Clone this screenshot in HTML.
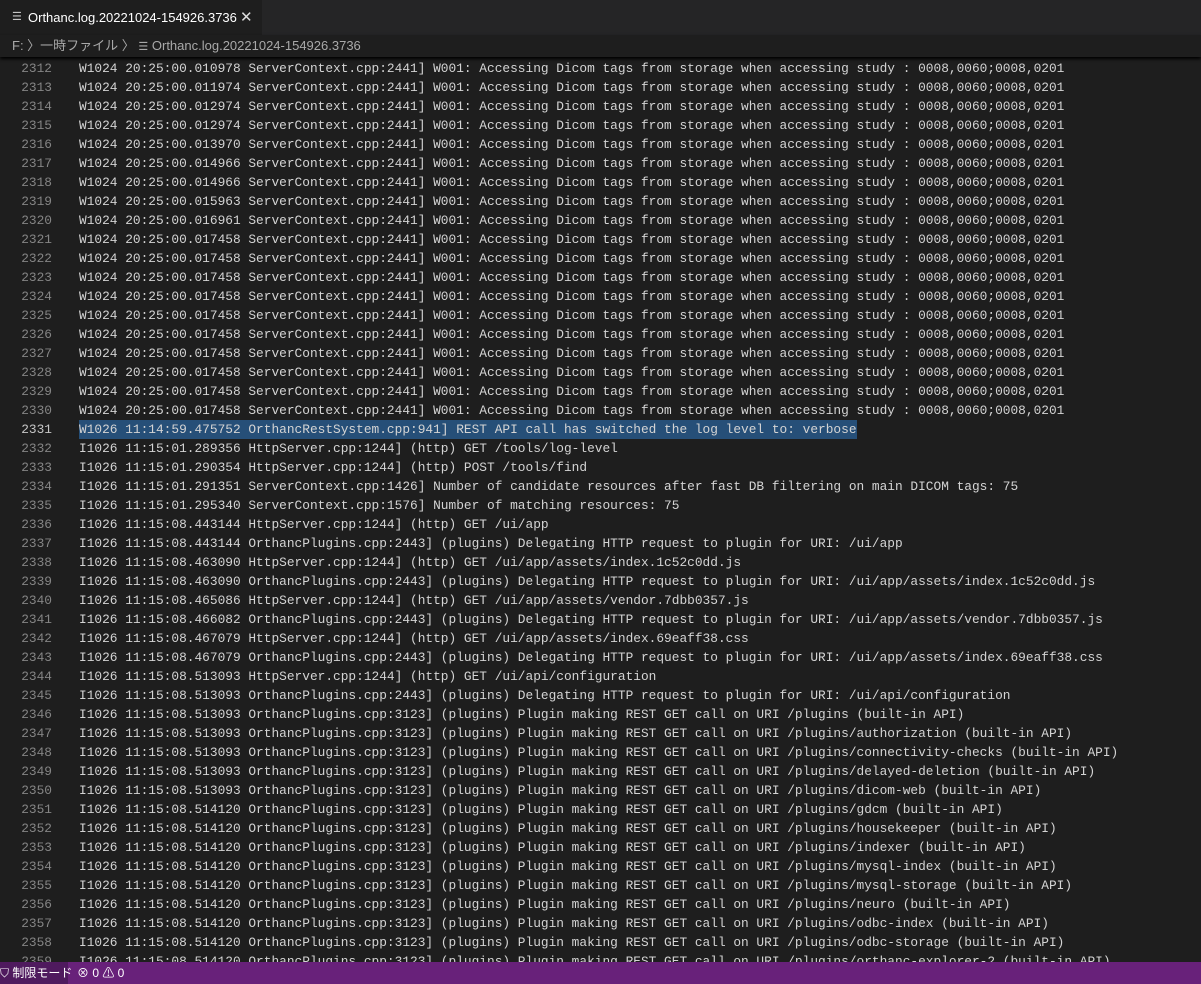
<!DOCTYPE html>
<html><head><meta charset="utf-8"><style>
*{margin:0;padding:0;box-sizing:border-box}
body{width:1201px;height:984px;background:#1e1e1e;overflow:hidden;position:relative;font-family:"Liberation Sans","Noto Sans CJK JP",sans-serif}
#tabs{position:absolute;top:0;left:0;width:1201px;height:35px;background:#252526}
#tab{position:absolute;left:0;top:0;width:262px;height:35px;background:#1e1e1e;color:#fff;font-size:13px;line-height:35px;padding-left:28px;white-space:nowrap}
#tab .ic{position:absolute;left:12px;top:0;color:#c5c5c5;font-size:11px}
#tab .x{position:absolute;left:240px;top:0;font-size:15px;color:#ddd}
#crumb{position:absolute;top:35px;left:0;width:1201px;height:22px;background:#1e1e1e;color:#a9a9a9;font-size:13px;line-height:22px;padding-left:12px;box-shadow:0 2px 3px #000;white-space:nowrap}
#ed{position:absolute;top:59px;left:0;width:1201px;height:903px;overflow:hidden;font-family:"Liberation Mono",monospace;font-size:12.83px;line-height:19px}
.l{height:19px;position:relative}
.n{position:absolute;left:0;width:52px;text-align:right;color:#858585}
.t{position:absolute;left:79px;color:#d4d4d4;white-space:pre}
.cur .n{color:#c6c6c6}
.sel{background:#264f78}
#sb{position:absolute;top:962px;left:0;width:1201px;height:22px;background:#68217a;color:#fff;font-size:12px;line-height:22px;white-space:nowrap;overflow:hidden}
#rm{position:absolute;left:0;top:0;width:68px;height:22px;background:#4f1a5e}
</style></head><body>
<div id="tabs"><div id="tab"><span class="ic">☰</span>Orthanc.log.20221024-154926.3736<span class="x">✕</span></div></div>
<div id="crumb">F: 〉一時ファイル 〉 <span style="font-size:11px">☰</span> Orthanc.log.20221024-154926.3736</div>
<div id="ed"><div class="l"><span class="n">2312</span><span class="t">W1024 20:25:00.010978 ServerContext.cpp:2441] W001: Accessing Dicom tags from storage when accessing study : 0008,0060;0008,0201</span></div><div class="l"><span class="n">2313</span><span class="t">W1024 20:25:00.011974 ServerContext.cpp:2441] W001: Accessing Dicom tags from storage when accessing study : 0008,0060;0008,0201</span></div><div class="l"><span class="n">2314</span><span class="t">W1024 20:25:00.012974 ServerContext.cpp:2441] W001: Accessing Dicom tags from storage when accessing study : 0008,0060;0008,0201</span></div><div class="l"><span class="n">2315</span><span class="t">W1024 20:25:00.012974 ServerContext.cpp:2441] W001: Accessing Dicom tags from storage when accessing study : 0008,0060;0008,0201</span></div><div class="l"><span class="n">2316</span><span class="t">W1024 20:25:00.013970 ServerContext.cpp:2441] W001: Accessing Dicom tags from storage when accessing study : 0008,0060;0008,0201</span></div><div class="l"><span class="n">2317</span><span class="t">W1024 20:25:00.014966 ServerContext.cpp:2441] W001: Accessing Dicom tags from storage when accessing study : 0008,0060;0008,0201</span></div><div class="l"><span class="n">2318</span><span class="t">W1024 20:25:00.014966 ServerContext.cpp:2441] W001: Accessing Dicom tags from storage when accessing study : 0008,0060;0008,0201</span></div><div class="l"><span class="n">2319</span><span class="t">W1024 20:25:00.015963 ServerContext.cpp:2441] W001: Accessing Dicom tags from storage when accessing study : 0008,0060;0008,0201</span></div><div class="l"><span class="n">2320</span><span class="t">W1024 20:25:00.016961 ServerContext.cpp:2441] W001: Accessing Dicom tags from storage when accessing study : 0008,0060;0008,0201</span></div><div class="l"><span class="n">2321</span><span class="t">W1024 20:25:00.017458 ServerContext.cpp:2441] W001: Accessing Dicom tags from storage when accessing study : 0008,0060;0008,0201</span></div><div class="l"><span class="n">2322</span><span class="t">W1024 20:25:00.017458 ServerContext.cpp:2441] W001: Accessing Dicom tags from storage when accessing study : 0008,0060;0008,0201</span></div><div class="l"><span class="n">2323</span><span class="t">W1024 20:25:00.017458 ServerContext.cpp:2441] W001: Accessing Dicom tags from storage when accessing study : 0008,0060;0008,0201</span></div><div class="l"><span class="n">2324</span><span class="t">W1024 20:25:00.017458 ServerContext.cpp:2441] W001: Accessing Dicom tags from storage when accessing study : 0008,0060;0008,0201</span></div><div class="l"><span class="n">2325</span><span class="t">W1024 20:25:00.017458 ServerContext.cpp:2441] W001: Accessing Dicom tags from storage when accessing study : 0008,0060;0008,0201</span></div><div class="l"><span class="n">2326</span><span class="t">W1024 20:25:00.017458 ServerContext.cpp:2441] W001: Accessing Dicom tags from storage when accessing study : 0008,0060;0008,0201</span></div><div class="l"><span class="n">2327</span><span class="t">W1024 20:25:00.017458 ServerContext.cpp:2441] W001: Accessing Dicom tags from storage when accessing study : 0008,0060;0008,0201</span></div><div class="l"><span class="n">2328</span><span class="t">W1024 20:25:00.017458 ServerContext.cpp:2441] W001: Accessing Dicom tags from storage when accessing study : 0008,0060;0008,0201</span></div><div class="l"><span class="n">2329</span><span class="t">W1024 20:25:00.017458 ServerContext.cpp:2441] W001: Accessing Dicom tags from storage when accessing study : 0008,0060;0008,0201</span></div><div class="l"><span class="n">2330</span><span class="t">W1024 20:25:00.017458 ServerContext.cpp:2441] W001: Accessing Dicom tags from storage when accessing study : 0008,0060;0008,0201</span></div><div class="l cur"><span class="n">2331</span><span class="t sel">W1026 11:14:59.475752 OrthancRestSystem.cpp:941] REST API call has switched the log level to: verbose</span></div><div class="l"><span class="n">2332</span><span class="t">I1026 11:15:01.289356 HttpServer.cpp:1244] (http) GET /tools/log-level</span></div><div class="l"><span class="n">2333</span><span class="t">I1026 11:15:01.290354 HttpServer.cpp:1244] (http) POST /tools/find</span></div><div class="l"><span class="n">2334</span><span class="t">I1026 11:15:01.291351 ServerContext.cpp:1426] Number of candidate resources after fast DB filtering on main DICOM tags: 75</span></div><div class="l"><span class="n">2335</span><span class="t">I1026 11:15:01.295340 ServerContext.cpp:1576] Number of matching resources: 75</span></div><div class="l"><span class="n">2336</span><span class="t">I1026 11:15:08.443144 HttpServer.cpp:1244] (http) GET /ui/app</span></div><div class="l"><span class="n">2337</span><span class="t">I1026 11:15:08.443144 OrthancPlugins.cpp:2443] (plugins) Delegating HTTP request to plugin for URI: /ui/app</span></div><div class="l"><span class="n">2338</span><span class="t">I1026 11:15:08.463090 HttpServer.cpp:1244] (http) GET /ui/app/assets/index.1c52c0dd.js</span></div><div class="l"><span class="n">2339</span><span class="t">I1026 11:15:08.463090 OrthancPlugins.cpp:2443] (plugins) Delegating HTTP request to plugin for URI: /ui/app/assets/index.1c52c0dd.js</span></div><div class="l"><span class="n">2340</span><span class="t">I1026 11:15:08.465086 HttpServer.cpp:1244] (http) GET /ui/app/assets/vendor.7dbb0357.js</span></div><div class="l"><span class="n">2341</span><span class="t">I1026 11:15:08.466082 OrthancPlugins.cpp:2443] (plugins) Delegating HTTP request to plugin for URI: /ui/app/assets/vendor.7dbb0357.js</span></div><div class="l"><span class="n">2342</span><span class="t">I1026 11:15:08.467079 HttpServer.cpp:1244] (http) GET /ui/app/assets/index.69eaff38.css</span></div><div class="l"><span class="n">2343</span><span class="t">I1026 11:15:08.467079 OrthancPlugins.cpp:2443] (plugins) Delegating HTTP request to plugin for URI: /ui/app/assets/index.69eaff38.css</span></div><div class="l"><span class="n">2344</span><span class="t">I1026 11:15:08.513093 HttpServer.cpp:1244] (http) GET /ui/api/configuration</span></div><div class="l"><span class="n">2345</span><span class="t">I1026 11:15:08.513093 OrthancPlugins.cpp:2443] (plugins) Delegating HTTP request to plugin for URI: /ui/api/configuration</span></div><div class="l"><span class="n">2346</span><span class="t">I1026 11:15:08.513093 OrthancPlugins.cpp:3123] (plugins) Plugin making REST GET call on URI /plugins (built-in API)</span></div><div class="l"><span class="n">2347</span><span class="t">I1026 11:15:08.513093 OrthancPlugins.cpp:3123] (plugins) Plugin making REST GET call on URI /plugins/authorization (built-in API)</span></div><div class="l"><span class="n">2348</span><span class="t">I1026 11:15:08.513093 OrthancPlugins.cpp:3123] (plugins) Plugin making REST GET call on URI /plugins/connectivity-checks (built-in API)</span></div><div class="l"><span class="n">2349</span><span class="t">I1026 11:15:08.513093 OrthancPlugins.cpp:3123] (plugins) Plugin making REST GET call on URI /plugins/delayed-deletion (built-in API)</span></div><div class="l"><span class="n">2350</span><span class="t">I1026 11:15:08.513093 OrthancPlugins.cpp:3123] (plugins) Plugin making REST GET call on URI /plugins/dicom-web (built-in API)</span></div><div class="l"><span class="n">2351</span><span class="t">I1026 11:15:08.514120 OrthancPlugins.cpp:3123] (plugins) Plugin making REST GET call on URI /plugins/gdcm (built-in API)</span></div><div class="l"><span class="n">2352</span><span class="t">I1026 11:15:08.514120 OrthancPlugins.cpp:3123] (plugins) Plugin making REST GET call on URI /plugins/housekeeper (built-in API)</span></div><div class="l"><span class="n">2353</span><span class="t">I1026 11:15:08.514120 OrthancPlugins.cpp:3123] (plugins) Plugin making REST GET call on URI /plugins/indexer (built-in API)</span></div><div class="l"><span class="n">2354</span><span class="t">I1026 11:15:08.514120 OrthancPlugins.cpp:3123] (plugins) Plugin making REST GET call on URI /plugins/mysql-index (built-in API)</span></div><div class="l"><span class="n">2355</span><span class="t">I1026 11:15:08.514120 OrthancPlugins.cpp:3123] (plugins) Plugin making REST GET call on URI /plugins/mysql-storage (built-in API)</span></div><div class="l"><span class="n">2356</span><span class="t">I1026 11:15:08.514120 OrthancPlugins.cpp:3123] (plugins) Plugin making REST GET call on URI /plugins/neuro (built-in API)</span></div><div class="l"><span class="n">2357</span><span class="t">I1026 11:15:08.514120 OrthancPlugins.cpp:3123] (plugins) Plugin making REST GET call on URI /plugins/odbc-index (built-in API)</span></div><div class="l"><span class="n">2358</span><span class="t">I1026 11:15:08.514120 OrthancPlugins.cpp:3123] (plugins) Plugin making REST GET call on URI /plugins/odbc-storage (built-in API)</span></div><div class="l"><span class="n">2359</span><span class="t">I1026 11:15:08.514120 OrthancPlugins.cpp:3123] (plugins) Plugin making REST GET call on URI /plugins/orthanc-explorer-2 (built-in API)</span></div></div>
<div id="sb"><div id="rm">⛉ 制限モード</div><span style="position:absolute;left:77px">⊗ 0 ⚠ 0</span></div>
</body></html>
